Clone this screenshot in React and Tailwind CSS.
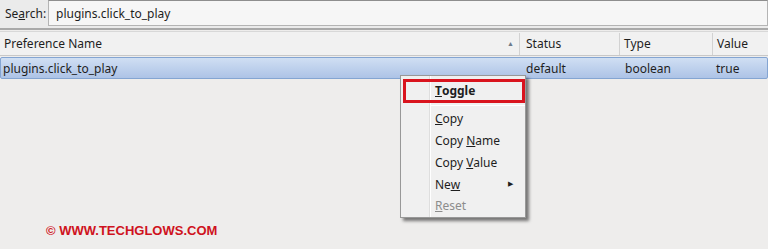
import React from "react";

const menuItems = [
  { pre: "", u: "C", post: "opy" },
  { pre: "Copy ", u: "N", post: "ame" },
  { pre: "Copy ", u: "V", post: "alue" },
  { pre: "Ne", u: "w", post: "", arrow: true },
  { pre: "", u: "R", post: "eset", disabled: true },
];

const App = () => {
  return (
    <div
      className="relative w-[768px] h-[249px] overflow-hidden bg-[#eeedec] text-[12px] text-[#1e1e1e]"
      style={{ fontFamily: '"Noto Sans", "Open Sans", sans-serif' }}
    >
      {/* search bar */}
      <div className="h-[30px] flex items-start bg-[#ebebeb] border-b-2 border-[#a9a9a9]">
        <div className="w-[48px] pl-[5px] pt-[6px] leading-[16px]">
          Se<span className="underline">a</span>rch:
        </div>
        <div className="flex-1 h-[26px] bg-[#f6f6f6] border border-[#b4b4b4] border-t-[#8e8e8e] pl-[7px] leading-[26px]">
          plugins.click_to_play
        </div>
      </div>

      {/* header row */}
      <div className="h-[25px] mt-[1px] flex items-center bg-[#f1f1f1] border-b border-[#c8c8c8] border-t border-t-[#d8d8d8] pt-[1px]">
        <div className="w-[520px] h-full flex items-center justify-between pl-[4px] pr-[5px] border-r border-[#d2d2d2]">
          <span>Preference Name</span>
          <span className="text-[7px] text-[#6d7a8a]">▲</span>
        </div>
        <div className="w-[100px] h-full flex items-center pl-[6px] border-r border-[#d2d2d2]">Status</div>
        <div className="w-[93px] h-full flex items-center pl-[4px] border-r border-[#d2d2d2]">Type</div>
        <div className="flex-1 h-full flex items-center pl-[4px]">Value</div>
      </div>

      {/* selected row */}
      <div className="h-[22px] mt-[1px] flex items-center pt-[1px] rounded-[2px] border border-[#84a5d2] bg-gradient-to-b from-[#d0dff3] to-[#adc3e6]">
        <div className="w-[520px] pl-[2px]">plugins.click_to_play</div>
        <div className="w-[100px] pl-[5px]">default</div>
        <div className="w-[93px] pl-[4px]">boolean</div>
        <div className="flex-1 pl-[2px]">true</div>
      </div>

      {/* context menu */}
      <div className="absolute left-[400px] top-[75px] w-[126px] h-[143px] bg-[#f0f0f0] border border-[#989898] shadow-[3px_3px_3px_rgba(0,0,0,0.5)] flex">
        <div className="w-[29px] border-r border-[#dedede]" />
        <div className="w-px bg-white" />
        <div className="flex-1 flex flex-col pt-[4px]">
          <div className="h-[22px] flex items-center pl-[4px] font-bold">
            <span className="underline">T</span>oggle
          </div>
          <div className="h-[7px] flex items-center">
            <div className="w-full h-px bg-[#d8d8d8] border-b border-white" />
          </div>
          {menuItems.map((m, i) => (
            <div
              key={i}
              className={`h-[22px] flex items-center justify-between pl-[4px] pr-[12px] ${m.disabled ? "text-[#8c8c8c]" : ""}`}
            >
              <span>
                {m.pre}
                <span className="underline">{m.u}</span>
                {m.post}
              </span>
              {m.arrow && <span className="text-[7px]">▶</span>}
            </div>
          ))}
        </div>
        {/* red highlight */}
        <div className="absolute left-[2px] top-[3px] w-[122px] h-[24px] border-[3px] border-[#d9141e]" />
      </div>

      {/* watermark */}
      <div
        className="absolute left-[46px] top-[223px] text-[13px] font-bold text-[#cf1220] leading-[16px]"
        style={{ fontFamily: '"Liberation Sans", Arial, sans-serif' }}
      >
        © WWW.TECHGLOWS.COM
      </div>
    </div>
  );
};

export default App;
